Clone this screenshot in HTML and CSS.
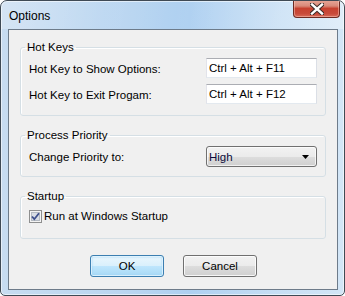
FILE: index.html
```html
<!DOCTYPE html>
<html>
<head>
<meta charset="utf-8">
<link rel="stylesheet" href="styles.css">
</head>
<body>
<div class="window">
  <div class="titlebar">
    <span class="title">Options</span>
    <button class="close" aria-label="Close">
      <svg width="14" height="12" viewBox="0 0 14 12">
        <path d="M2 1.5 L12 10.5 M12 1.5 L2 10.5" stroke="#3a2a28" stroke-width="4.4" stroke-linecap="square" fill="none"/>
        <path d="M2 1.5 L12 10.5 M12 1.5 L2 10.5" stroke="#ffffff" stroke-width="2.4" stroke-linecap="square" fill="none"/>
      </svg>
    </button>
  </div>
  <div class="client">
    <fieldset class="group group-hotkeys">
      <legend>Hot Keys</legend>
      <div class="row">
        <label class="lbl">Hot Key to Show Options:</label>
        <input class="textbox" type="text" value="Ctrl + Alt + F11">
      </div>
      <div class="row">
        <label class="lbl">Hot Key to Exit Progam:</label>
        <input class="textbox" type="text" value="Ctrl + Alt + F12">
      </div>
    </fieldset>
    <fieldset class="group group-priority">
      <legend>Process Priority</legend>
      <div class="row">
        <label class="lbl">Change Priority to:</label>
        <div class="combo">
          <span class="combo-text">High</span>
          <svg class="combo-arrow" width="7" height="4" viewBox="0 0 7 4"><path d="M0 0 H7 L3.5 4 Z" fill="#000"/></svg>
        </div>
      </div>
    </fieldset>
    <fieldset class="group group-startup">
      <legend>Startup</legend>
      <div class="check-row">
        <span class="checkbox">
          <svg width="13" height="13" viewBox="0 0 13 13">
            <rect x="0.5" y="0.5" width="12" height="12" fill="#f4f4f4" stroke="#8e8f8f"/>
            <rect x="2.5" y="2.5" width="8" height="8" fill="#d8dde4" stroke="#b4bac2"/>
            <path d="M3 6.5 L5.3 9.2 L10 3.2" stroke="#3d4f8c" stroke-width="1.8" fill="none"/>
          </svg>
        </span>
        <span class="check-label">Run at Windows Startup</span>
      </div>
    </fieldset>
    <div class="buttons">
      <button class="btn btn-default">OK</button>
      <button class="btn">Cancel</button>
    </div>
  </div>
</div>
</body>
</html>
```

FILE: styles.css
```css
* { box-sizing: border-box; }
html, body { margin: 0; padding: 0; background: #ffffff; }
body { font-family: "Liberation Sans", Arial, sans-serif; font-size: 11px; color: #000; }

.window {
  width: 345px;
  height: 296px;
  border: 1px solid #3f4a55;
  border-radius: 7px 7px 5px 5px;
  background: linear-gradient(to right, #c7dcf1 0%, #bad6f1 35%, #aed0f1 55%, #c6def4 80%, #d3e6f7 100%);
  box-shadow: inset 0 0 0 1px rgba(255,255,255,0.55);
  display: flex;
  flex-direction: column;
  overflow: hidden;
}

.titlebar {
  height: 28px;
  display: flex;
  justify-content: space-between;
  align-items: flex-start;
  background: linear-gradient(100deg, rgba(255,255,255,0.25) 0%, rgba(255,255,255,0.05) 30%, rgba(255,255,255,0) 50%, rgba(255,255,255,0.2) 85%, rgba(255,255,255,0.3) 100%);
}
.title {
  margin: 8px 0 0 8px;
  font-size: 12px;
  line-height: 14px;
  color: #000;
}
.close {
  width: 47px;
  height: 18px;
  margin: -1px 4px 0 0;
  padding: 0;
  border: 1px solid #6d2a22;
  border-top: none;
  border-radius: 0 0 4px 4px;
  background: linear-gradient(to bottom, #e8a899 0%, #d98a7a 35%, #c7412f 50%, #c84a3a 80%, #d86a58 100%);
  box-shadow: inset 0 0 0 1px rgba(255,210,200,0.45);
  display: flex;
  align-items: center;
  justify-content: center;
}

.client {
  margin: 0 6px 0 7px;
  height: 261px;
  border: 1px solid #6d7b8a;
  background: #f0f0f0;
  padding: 10px 11px 12px 11px;
  display: flex;
  flex-direction: column;
}

.group {
  margin: 0;
  border: 1px solid #d5dfe5;
  border-radius: 3px;
  padding: 3px 8px 11px 8px;
  min-width: 0;
  box-shadow: inset 1px 1px 0 #fff;
}
.group legend {
  padding: 0 2px;
  margin-left: -4px;
  line-height: 15px;
  font-size: 11.5px;
  color: #000;
}
.group-hotkeys { display: flex; flex-direction: column; gap: 6px; }
.group-priority { margin-top: 12px; padding-bottom: 9px; }
.group-startup { margin-top: 12px; padding-top: 4px; padding-bottom: 14px; }

.row {
  display: flex;
  justify-content: space-between;
  align-items: center;
}
.lbl { padding-top: 1px; font-size: 11.5px; }

.textbox {
  width: 111px;
  height: 20px;
  border: 1px solid;
  border-color: #abadb3 #dbdfe6 #e3e9ef #e2e3ea;
  background: #fff;
  padding: 0 2px;
  font-family: inherit;
  font-size: 11.5px;
  color: #000;
  outline: none;
  margin: 0;
}

.combo {
  width: 111px;
  height: 21px;
  border: 1px solid #707070;
  border-radius: 3px;
  background: linear-gradient(to bottom, #f2f2f2 0%, #ebebeb 50%, #dddddd 51%, #cfcfcf 100%);
  box-shadow: inset 0 0 0 1px rgba(255,255,255,0.7);
  display: flex;
  align-items: center;
  justify-content: space-between;
  padding: 0 7px 0 2px;
}
.combo-text { color: #0b0b3a; font-size: 11.5px; }

.check-row {
  display: flex;
  align-items: center;
  height: 16px;
}
.checkbox { width: 13px; height: 13px; display: block; line-height: 0; }
.check-label { margin-left: 2px; font-size: 11.5px; }

.buttons {
  margin-top: auto;
  display: flex;
  justify-content: center;
  gap: 19px;
  padding-left: 1px;
}
.btn {
  width: 74px;
  height: 22px;
  border: 1px solid #707070;
  border-radius: 3px;
  background: linear-gradient(to bottom, #f2f2f2 0%, #ebebeb 50%, #dddddd 51%, #cfcfcf 100%);
  box-shadow: inset 0 0 0 1px rgba(255,255,255,0.8);
  font-family: inherit;
  font-size: 11.5px;
  color: #000;
  padding: 0;
  margin: 0;
}
.btn-default {
  border-color: #3c7fb1;
  background: linear-gradient(to bottom, #eaf6fd 0%, #d9f0fc 50%, #bee6fd 51%, #a7d9f5 100%);
  box-shadow: inset 0 0 0 1px rgba(255,255,255,0.6), inset 0 0 2px 1px #9bd6f8;
}
```
